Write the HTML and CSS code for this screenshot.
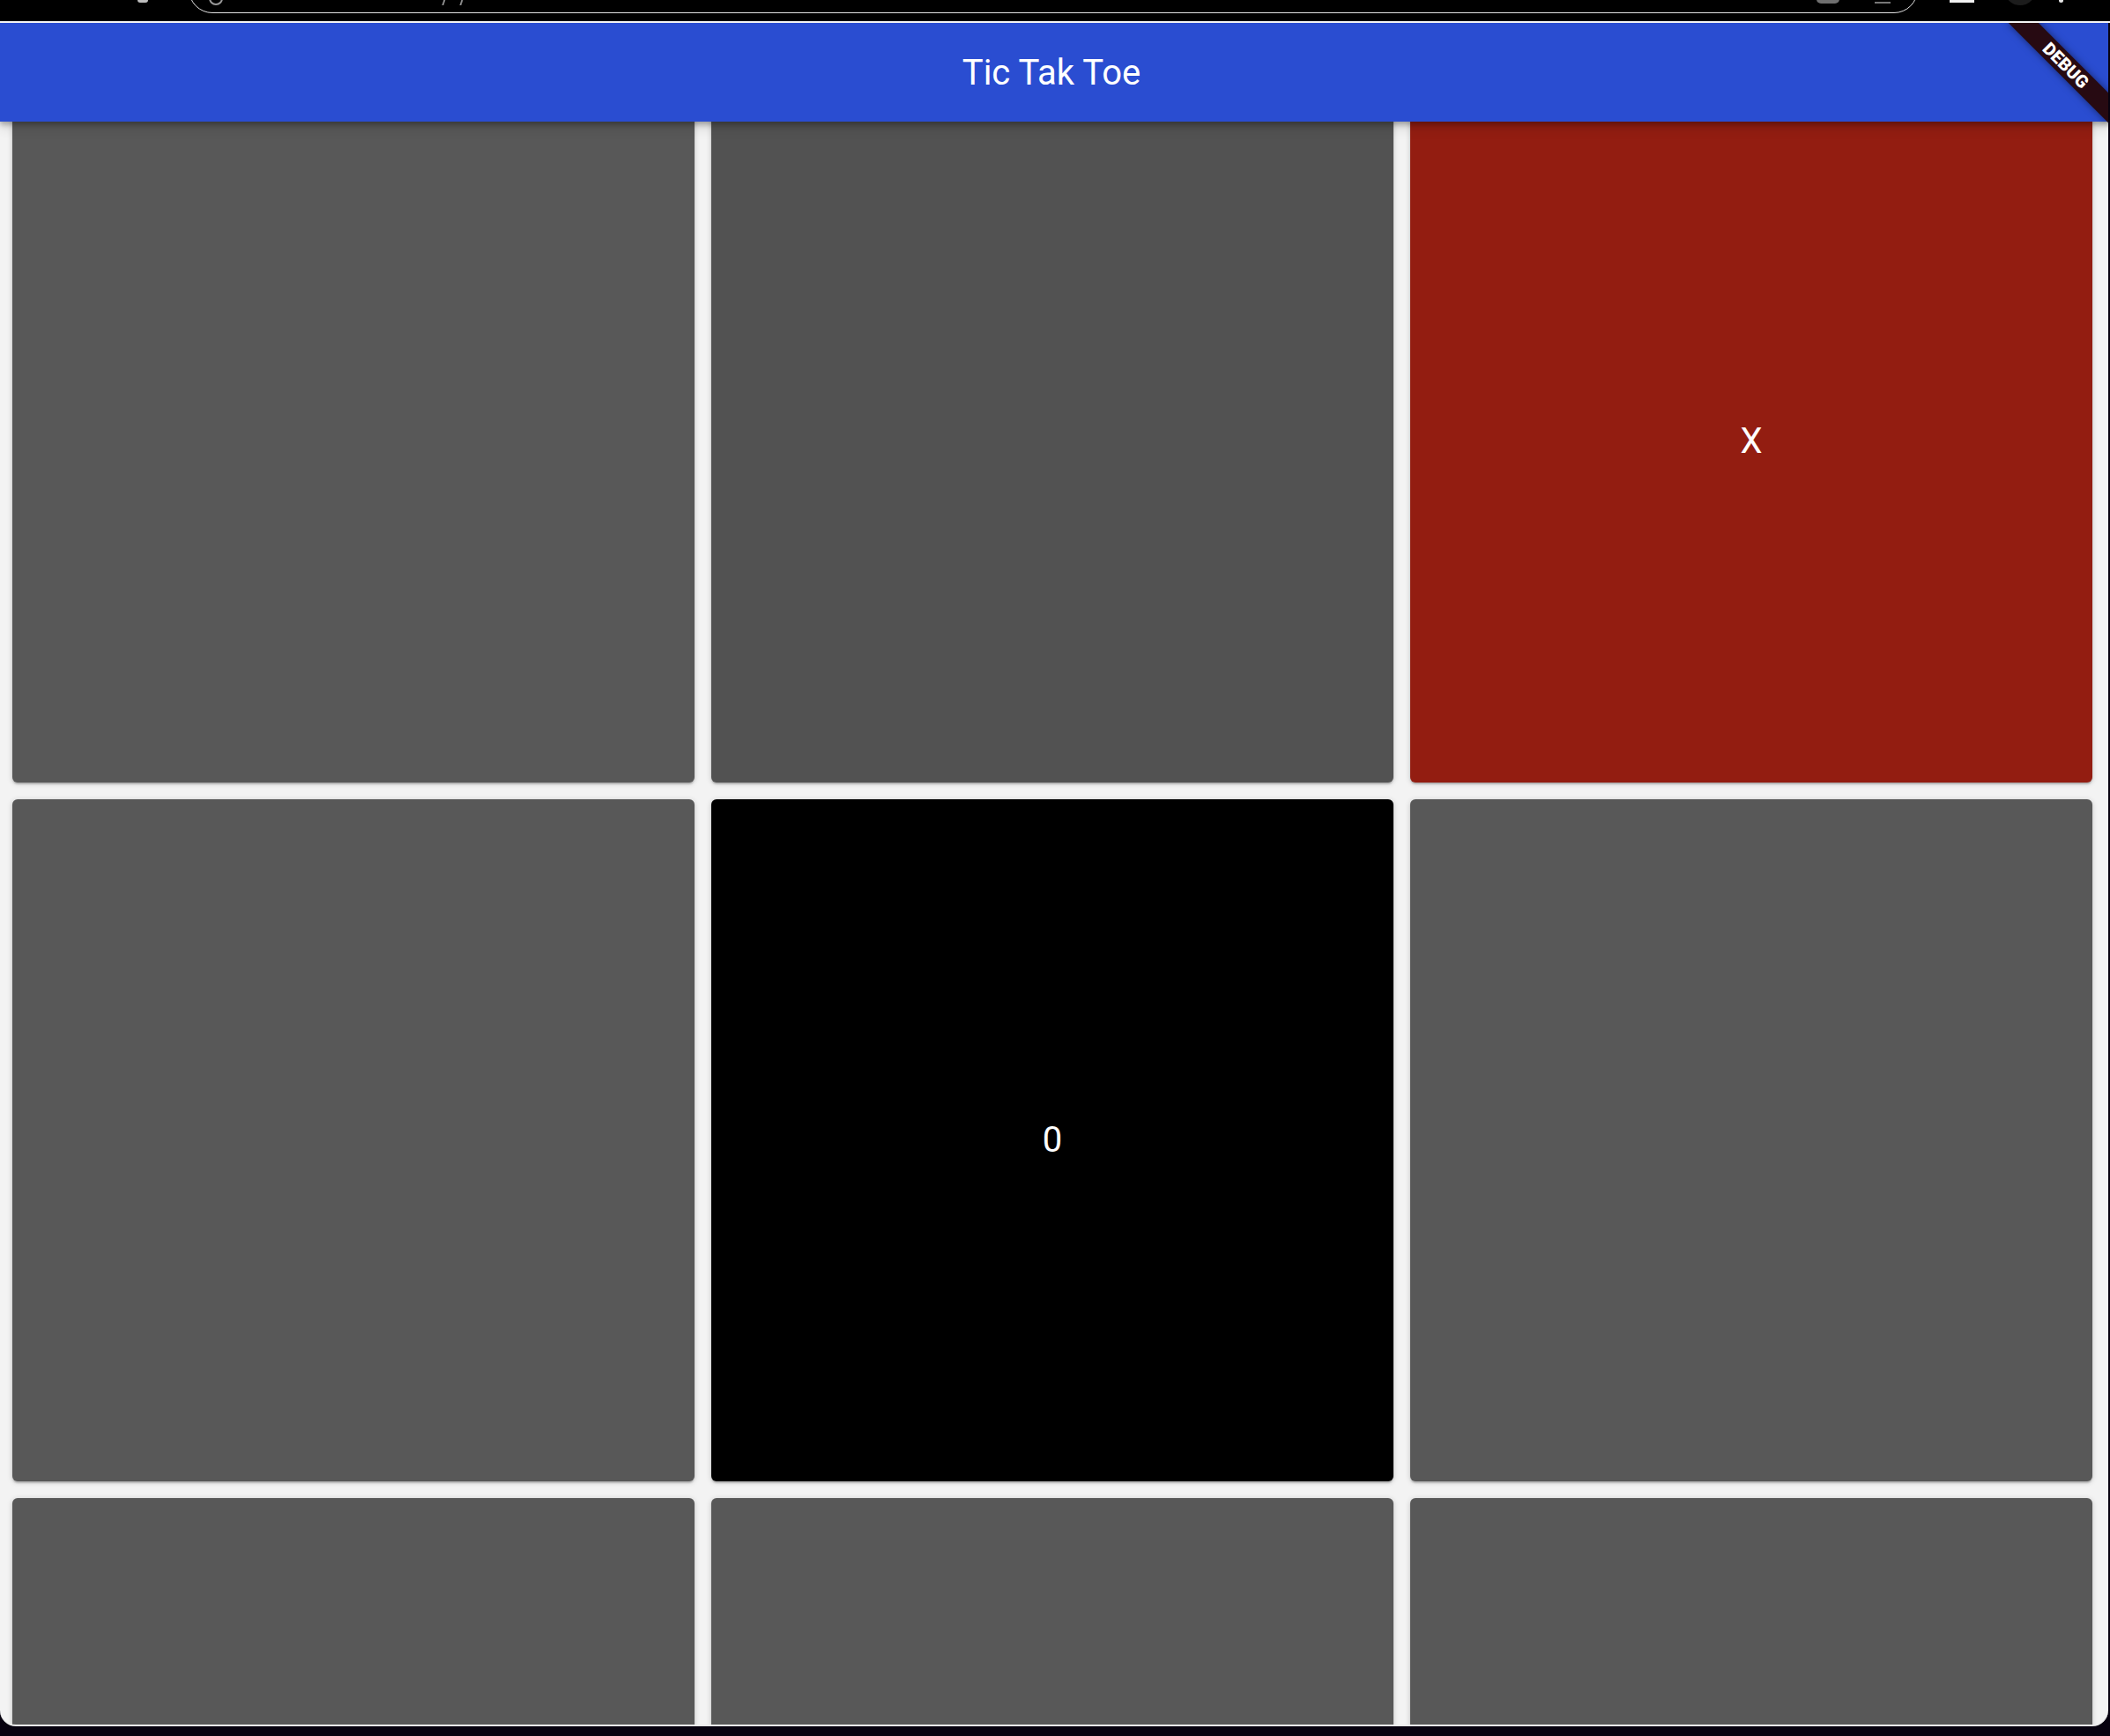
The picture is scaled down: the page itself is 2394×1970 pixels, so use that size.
FILE: index.html
```html
<!DOCTYPE html>
<html lang="en">
<head>
<meta charset="utf-8">
<title>Tic Tak Toe</title>
<link rel="stylesheet" href="styles.css">
</head>
<body>
  <div class="chrome">
    <span class="chrome-reload"></span>
    <div class="urlbar">
      <span class="url-info"></span>
      <span class="url-slash"></span>
      <span class="url-slash"></span>
      <span class="url-spacer"></span>
      <span class="url-icon url-icon-a"></span>
      <span class="url-icon url-icon-b"></span>
    </div>
    <span class="tb-square"></span>
    <span class="tb-avatar"></span>
    <span class="tb-menu"></span>
  </div>
  <div class="app">
    <header class="appbar"><h1 class="title">Tic Tak Toe</h1></header>
    <div class="banner-anchor"><div class="banner">DEBUG</div></div>
    <main class="board">
      <div class="tile tile-empty"></div>
      <div class="tile tile-empty tile-dim"></div>
      <div class="tile tile-x">X</div>
      <div class="tile tile-empty"></div>
      <div class="tile tile-o">0</div>
      <div class="tile tile-empty"></div>
      <div class="tile tile-empty"></div>
      <div class="tile tile-empty"></div>
      <div class="tile tile-empty"></div>
    </main>
  </div>
</body>
</html>
```
FILE: styles.css
```css
* { box-sizing: border-box; }

html, body {
  margin: 0;
  padding: 0;
}

body {
  width: 2394px;
  height: 1970px;
  overflow: hidden;
  background: #07020f;
  font-family: Roboto, "Noto Sans", "Liberation Sans", sans-serif;
}

/* ---- browser chrome (cut off at the top) ---- */
.chrome {
  height: 26px;
  background: #000;
  border-bottom: 2px solid #f4f4f4;
  display: flex;
  align-items: flex-start;
  overflow: hidden;
  padding-left: 156px;
}

.chrome-reload {
  width: 12px;
  height: 3px;
  border-radius: 0 0 6px 6px;
  background: #bdbdbd;
}

.urlbar {
  margin-left: 46px;
  margin-top: -40px;
  width: 1962px;
  height: 55px;
  border: 1.5px solid #e2e2e2;
  border-radius: 27px;
  display: flex;
  align-items: flex-end;
  padding: 0 30px 0 22px;
  flex-shrink: 0;
}

.url-info {
  width: 16px;
  height: 16px;
  border-radius: 50%;
  border: 2px solid #9a9a9a;
  margin-bottom: 8px;
}

.url-slash {
  width: 2px;
  height: 10px;
  margin-left: 250px;
  margin-bottom: 8px;
  background: #8a8a8a;
  transform: skewX(-18deg);
}

.url-slash + .url-slash { margin-left: 18px; }

.url-spacer { flex: 1; }

.url-icon {
  margin-bottom: 10px;
  height: 14px;
}

.url-icon-a {
  width: 26px;
  background: #6f6f6f;
  border-radius: 0 0 5px 5px;
}

.url-icon-b {
  width: 18px;
  margin-left: 40px;
  border-bottom: 2px solid #777;
}

.tb-square {
  margin-left: 36px;
  margin-top: -10px;
  width: 28px;
  height: 13px;
  border: 3px solid #f2f2f2;
  border-top: none;
}

.tb-avatar {
  margin-left: 34px;
  margin-top: -30px;
  width: 36px;
  height: 36px;
  border-radius: 50%;
  background: #1c1c1c;
}

.tb-menu {
  margin-left: 26px;
  margin-top: -2px;
  width: 5px;
  height: 5px;
  border-radius: 50%;
  background: #e6e6e6;
}

/* ---- app area ---- */
.app {
  position: relative;
  width: 2392px;
  height: 1933px;
  background: #f3f3f3;
  border-bottom: 2px solid #ececec;
  border-radius: 0 0 18px 18px;
  overflow: hidden;
}

.appbar {
  position: relative;
  z-index: 2;
  height: 112px;
  background: #2a4dd1;
  display: flex;
  align-items: center;
  justify-content: center;
  padding-top: 2px;
  box-shadow: 0 3px 6px rgba(0, 0, 0, 0.28), 0 6px 14px rgba(0, 0, 0, 0.14);
}

.title {
  margin: 0;
  color: #fff;
  font-family: Roboto, "Noto Sans", sans-serif;
  font-weight: 400;
  font-size: 40px;
  line-height: 48px;
  padding-right: 6px;
}

.banner-anchor {
  position: absolute;
  top: 0;
  right: 0;
  width: 0;
  height: 0;
  z-index: 3;
  transform: rotate(45deg);
  transform-origin: 0 0;
}

.banner {
  position: absolute;
  left: -80px;
  top: 56px;
  width: 160px;
  height: 24px;
  background: #270a12;
  color: #fff;
  font-family: Roboto, "Liberation Sans", sans-serif;
  font-weight: 900;
  font-size: 20px;
  line-height: 24px;
  text-align: center;
  box-shadow: 0 0 8px rgba(0, 0, 0, 0.5);
}

.board {
  display: grid;
  grid-template-columns: repeat(3, 774px);
  grid-auto-rows: 774px;
  gap: 19px;
  padding-left: 14px;
  margin-top: -24px;
}

.tile {
  border-radius: 6px;
  display: flex;
  align-items: center;
  justify-content: center;
  color: #fff;
  font-size: 40px;
  line-height: 48px;
  box-shadow: 0 2px 2px rgba(0, 0, 0, 0.14), 0 3px 2px -2px rgba(0, 0, 0, 0.12), 0 1px 6px rgba(0, 0, 0, 0.18);
}

.tile-empty { background: #585858; }
.tile-dim { background: #525252; }
.tile-x { background: #931d11; }
.tile-o { background: #000; }
```
